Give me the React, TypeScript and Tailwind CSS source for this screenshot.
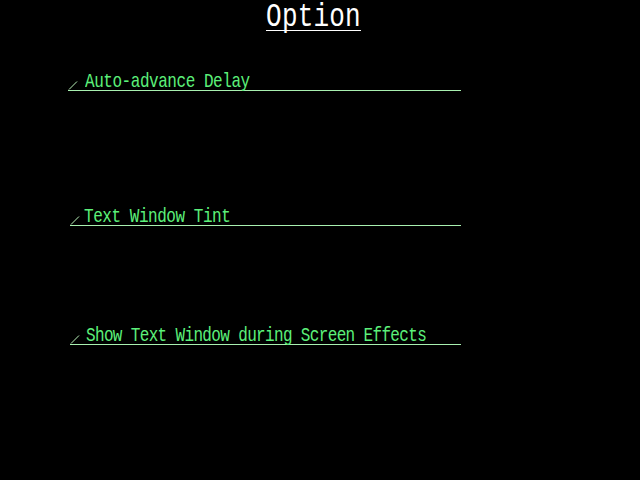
const mono = "font-['Liberation_Mono','Courier_New',monospace]";

function Slash() {
  return (
    <svg width="10" height="10" viewBox="0 0 10 10" className="shrink-0">
      <line x1="1" y1="9.5" x2="9" y2="1.5" stroke="#b8f0b8" strokeWidth="1" />
    </svg>
  );
}

function OptionRow({
  label,
  indent,
  width,
  tracking,
}: {
  label: string;
  indent: string;
  width: string;
  tracking: string;
}) {
  return (
    <div className={`flex items-end ${width} h-[22px] border-b border-[#a8f0b0]`}>
      <Slash />
      <span
        className={`${indent} ${tracking} ${mono} inline-block origin-bottom scale-y-[1.22] text-[16px] leading-[16px] text-[#5cf07a] -mb-[2px]`}
      >
        {label}
      </span>
    </div>
  );
}

export default function App() {
  return (
    <div className="w-[640px] h-[480px] bg-black overflow-hidden">
      {/* 제목 */}
      <div className="flex justify-center pr-[13px] pt-[11px]">
        <div className="flex border-b border-white">
          <span
            className={`${mono} block origin-bottom scale-y-[1.25] text-[26px] leading-[19px] tracking-[0.2px] text-white`}
          >
            Option
          </span>
        </div>
      </div>

      <div className="flex flex-col pl-[68px]">
        <div className="mt-[38px]">
          <OptionRow
            label="Auto-advance Delay"
            indent="ml-[7px]"
            width="w-[393px]"
            tracking="tracking-[-0.45px]"
          />
        </div>
        <div className="mt-[113px] pl-[2px]">
          <OptionRow
            label="Text Window Tint"
            indent="ml-[4px]"
            width="w-[391px]"
            tracking="tracking-[-0.45px]"
          />
        </div>
        <div className="mt-[97px] pl-[2px]">
          <OptionRow
            label="Show Text Window during Screen Effects"
            indent="ml-[6px]"
            width="w-[391px]"
            tracking="tracking-[-0.65px]"
          />
        </div>
      </div>
    </div>
  );
}
